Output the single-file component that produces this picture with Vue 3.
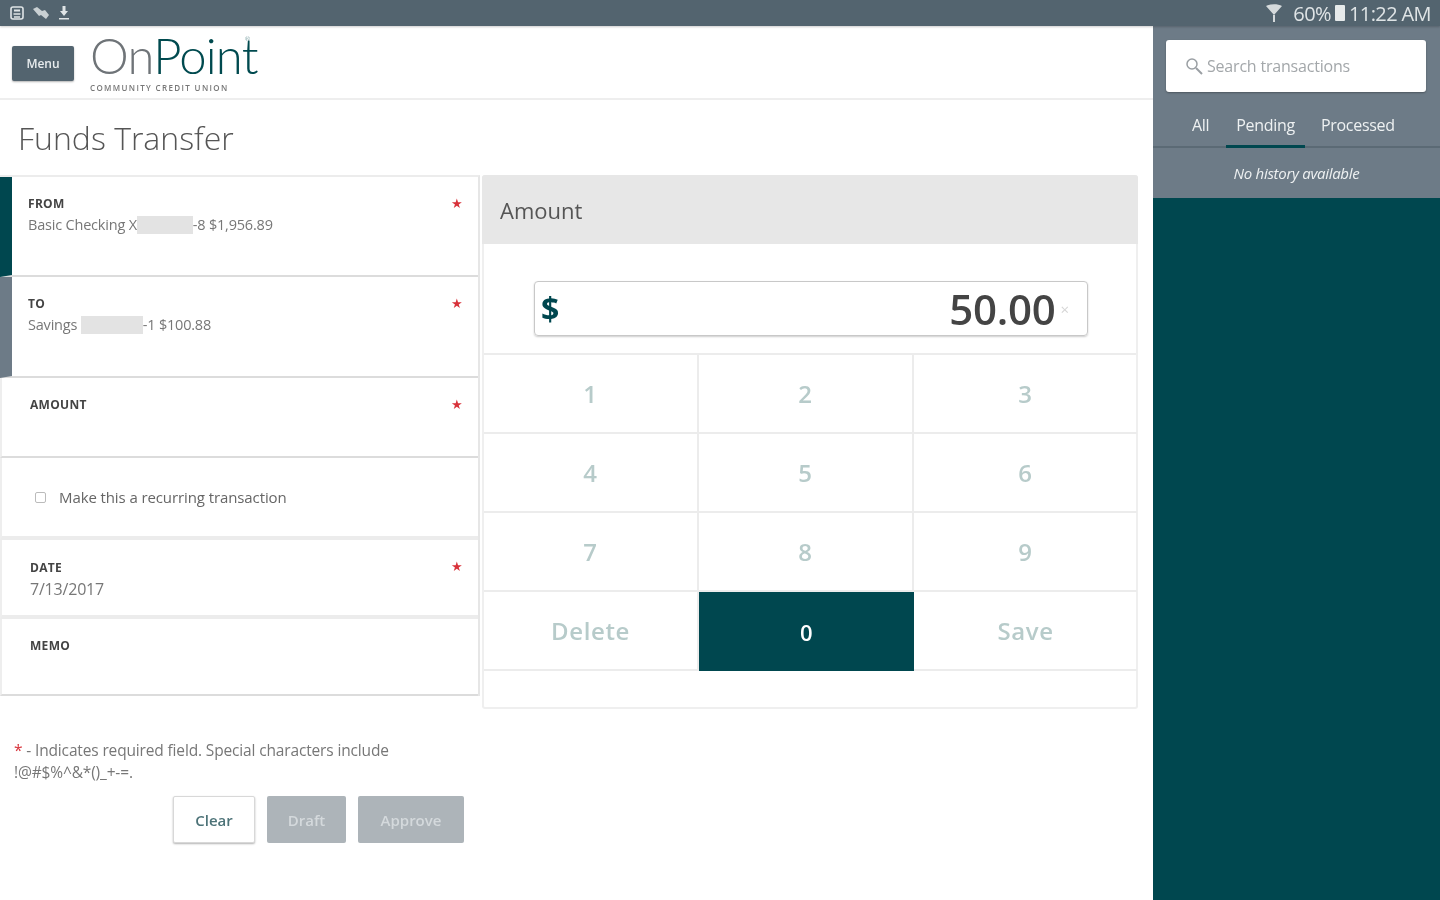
<template>
  <div class="page">
    <div class="status-bar">
      <div class="status-icons">
        <svg width="16" height="16" viewBox="0 0 16 16" fill="none" stroke="#dfe4e6" stroke-width="1.6">
          <rect x="2" y="2" width="12" height="12" rx="2" />
          <path d="M4.5 9h7M5 12h6" />
          <rect x="5" y="4.5" width="6" height="2" fill="#dfe4e6" stroke="none" />
        </svg>
        <svg width="18" height="16" viewBox="0 0 18 16" fill="#c9d0d3">
          <path d="M1 4l4-2 5 4 3-1 4 5-3 4-5-4-2 1z" />
        </svg>
        <svg width="14" height="16" viewBox="0 0 14 16" fill="#dfe4e6">
          <path d="M5.5 1h3v5H11l-4 5-4-5h2.500zM2 13h10v1.500H2z" />
        </svg>
      </div>
      <div class="status-right">
        <svg width="18" height="20" viewBox="0 0 18 20" fill="#d5dadc">
          <path d="M1 3c4-2.500 12-2.500 16 0l-8 9zM8 12h2v7H8z" />
        </svg>
        <span class="battery-text">60%</span>
        <span class="battery"></span>
        <span>11:22 AM</span>
      </div>
    </div>

    <div class="body">
      <main class="main">
        <header class="top">
          <button class="menu-btn">Menu</button>
          <div class="logo">
            <div class="logo-name"><span class="logo-on">On</span>Point<sup>®</sup></div>
            <div class="logo-sub">COMMUNITY CREDIT UNION</div>
          </div>
        </header>

        <h1 class="page-title">Funds Transfer</h1>

        <div class="content">
          <div class="left">
            <div class="fields">
              <div
                v-for="field in fields"
                :key="field.label"
                :class="['field', field.cls]"
              >
                <div class="field-label">{{ field.label }}</div>
                <div v-if="field.value" class="field-value">
                  {{ field.value }}<span v-if="field.hidden" class="hidden-num"></span>{{ field.rest }}
                </div>
                <span v-if="field.required" class="req">★</span>
              </div>
              <div class="field recurring">
                <span class="check"></span>
                <span>Make this a recurring transaction</span>
              </div>
              <div
                v-for="field in fieldsLower"
                :key="field.label"
                :class="['field', field.cls]"
              >
                <div class="field-label">{{ field.label }}</div>
                <div v-if="field.value" class="field-value">{{ field.value }}</div>
                <span v-if="field.required" class="req">★</span>
              </div>
            </div>

            <p class="note">
              <span class="note-star">*</span> - Indicates required field. Special characters include<br />!@#$%^&amp;*()_+-=.
            </p>
            <div class="actions">
              <button class="btn-clear">Clear</button>
              <button class="btn-off draft">Draft</button>
              <button class="btn-off approve">Approve</button>
            </div>
          </div>

          <section class="amount-panel">
            <div class="amount-head">Amount</div>
            <div class="amount-input-wrap">
              <div class="amount-input">
                <span class="dollar">$</span>
                <span class="amount-val">50.00</span>
                <span class="clear-x">×</span>
              </div>
            </div>
            <div class="keypad">
              <div
                v-for="key in keys"
                :key="key"
                :class="['key', { active: key === '0' }]"
              >
                {{ key }}
              </div>
            </div>
          </section>
        </div>
      </main>

      <aside class="side">
        <div class="side-top">
          <div class="search-wrap">
            <div class="search">
              <svg width="20" height="20" viewBox="0 0 20 20" fill="none" stroke="#9a9fa3" stroke-width="1.500">
                <circle cx="8" cy="8" r="5" />
                <path d="M12 12l6 6" stroke-width="2" />
              </svg>
              <span>Search transactions</span>
            </div>
          </div>
          <div class="tabs">
            <span class="tab tab-all">All</span>
            <span class="tab tab-pending">Pending</span>
            <span class="tab tab-processed">Processed</span>
          </div>
          <div class="no-history">No history available</div>
        </div>
      </aside>
    </div>
  </div>
</template>

<script setup>
const fields = [
  {
    label: "FROM",
    value: "Basic Checking X",
    hidden: true,
    rest: "-8 $1,956.89",
    required: true,
    cls: "from",
  },
  {
    label: "TO",
    value: "Savings ",
    hidden: true,
    rest: "-1 $100.88",
    required: true,
    cls: "to",
  },
  { label: "AMOUNT", required: true, cls: "amount" },
];

const fieldsLower = [
  { label: "DATE", value: "7/13/2017", required: true, cls: "date" },
  { label: "MEMO", cls: "memo" },
];

const keys = ["1", "2", "3", "4", "5", "6", "7", "8", "9", "Delete", "0", "Save"];
</script>

<style>
html,
body {
  margin: 0;
  background: #fff;
}
</style>

<style scoped>
.page {
  width: 1440px;
  height: 900px;
  overflow: hidden;
  display: flex;
  flex-direction: column;
  font-family: "Open Sans", "Liberation Sans", sans-serif;
  color: #555;
  filter: blur(0.45px);
}

.status-bar {
  height: 26px;
  flex: none;
  background: #53646f;
  display: flex;
  align-items: center;
  justify-content: space-between;
  padding: 0 9px;
  color: #dfe4e6;
  font-size: 20px;
  letter-spacing: -0.6px;
  box-shadow: 0 1px 2px rgba(0, 0, 0, 0.2);
  position: relative;
  z-index: 1;
}

.status-icons {
  display: flex;
  gap: 7px;
  align-items: center;
}

.status-right {
  display: flex;
  align-items: center;
  gap: 4px;
}

.battery-text {
  margin-left: 6px;
}

.battery {
  width: 10px;
  height: 16px;
  background: #e6eaeb;
  border-radius: 1px;
}

.body {
  flex: 1;
  display: flex;
  min-height: 0;
}

.main {
  width: 1153px;
  flex: none;
  display: flex;
  flex-direction: column;
}

.top {
  height: 74px;
  flex: none;
  border-bottom: 2px solid #eeeeee;
  box-sizing: border-box;
  display: flex;
  padding-left: 12px;
  gap: 16px;
}

.menu-btn {
  width: 62px;
  height: 35px;
  margin-top: 20px;
  border: none;
  border-radius: 2px;
  background: #53646f;
  color: #e8ecee;
  font-family: inherit;
  font-size: 12px;
  font-weight: 600;
  padding: 0;
  box-shadow: 0 1px 2px rgba(0, 0, 0, 0.3);
}

.logo {
  width: 160px;
  padding-top: 3px;
}

.logo-name {
  font-family: "Lato", sans-serif;
  font-weight: 300;
  font-size: 49px;
  line-height: 52px;
  letter-spacing: -0.8px;
  color: #004a4f;
  white-space: nowrap;
  position: relative;
}

.logo-on {
  color: #6f7478;
}

.logo-name sup {
  font-size: 6px;
  position: absolute;
  top: -16px;
  left: 155px;
}

.logo-sub {
  font-size: 8px;
  line-height: 10px;
  margin-top: 2px;
  letter-spacing: 1.35px;
  color: #777;
  font-weight: 600;
  white-space: nowrap;
}

.page-title {
  margin: 0;
  height: 75px;
  flex: none;
  box-sizing: border-box;
  padding: 15px 0 0 18px;
  font-size: 32px;
  line-height: 46px;
  font-weight: 300;
  color: #555;
}

.content {
  display: flex;
  gap: 2px;
  flex: 1;
  min-height: 0;
}

.left {
  width: 480px;
  flex: none;
}

.fields {
  border-right: 2px solid #e6e6e6;
  border-top: 2px solid #ececec;
}

.field {
  position: relative;
  box-sizing: border-box;
  border-bottom: 2px solid #dcdcdc;
  padding: 19px 28px 0;
  border-left: 2px solid #eee;
}

.field.from {
  height: 100px;
  border-left: 12px solid #00474f;
  padding-left: 16px;
}

.field.to {
  height: 101px;
  border-left: 12px solid #6d7b87;
  padding-left: 16px;
}

.field.amount {
  height: 80px;
}

.field.recurring {
  height: 82px;
  display: flex;
  align-items: center;
  gap: 13px;
  padding: 0 0 0 33px;
  font-size: 15px;
  letter-spacing: -0.1px;
  border-bottom: 4px solid #ececec;
  color: #666;
}

.field.date {
  height: 79px;
  border-bottom: 4px solid #ececec;
  padding-top: 20px;
}

.field.memo {
  height: 77px;
  padding-top: 19px;
}

.check {
  width: 9px;
  height: 9px;
  border: 1px solid #bbb;
  border-radius: 2px;
}

.field-label {
  font-size: 12px;
  line-height: 16px;
  font-weight: 700;
  color: #444;
  letter-spacing: 0.3px;
}

.field-value {
  font-size: 14.500px;
  line-height: 22px;
  margin-top: 2px;
  color: #777;
  letter-spacing: -0.2px;
  white-space: nowrap;
}

.hidden-num {
  display: inline-block;
  vertical-align: -4px;
  width: 56px;
  height: 18px;
  background: #e3e3e3;
}

.to .hidden-num {
  width: 62px;
}

.date .field-value {
  font-size: 16px;
}

.req {
  position: absolute;
  top: 17px;
  right: 15px;
  color: #d8323a;
  font-size: 13px;
  line-height: 18px;
}

.note {
  margin: 43px 0 0 14px;
  font-size: 15.500px;
  line-height: 22px;
  color: #777;
  letter-spacing: -0.15px;
  white-space: nowrap;
}

.note-star {
  color: #d8323a;
}

.actions {
  display: flex;
  gap: 12px;
  margin: 13px 0 0 173px;
}

.actions button {
  height: 47px;
  font-family: inherit;
  font-size: 15px;
  font-weight: 600;
  border-radius: 2px;
  padding: 0;
}

.btn-clear {
  width: 82px;
  background: #fff;
  color: #4d7378;
  border: 1px solid #d8d8d8;
  box-shadow: 0 1px 2px rgba(0, 0, 0, 0.3);
}

.btn-off {
  border: none;
  background: #adb4b9;
  color: #d4d9dc;
}

.draft {
  width: 79px;
}

.approve {
  width: 106px;
}

.amount-panel {
  width: 656px;
  height: 534px;
  box-sizing: border-box;
  border: 2px solid #efefef;
  border-top: none;
  border-radius: 3px;
  background: #fff;
}

.amount-head {
  height: 69px;
  margin: 0 -2px;
  background: #e7e7e7;
  border-radius: 3px 3px 0 0;
  display: flex;
  align-items: center;
  padding-left: 18px;
  font-size: 22px;
  font-weight: 400;
  color: #555;
}

.amount-input-wrap {
  height: 111px;
  box-sizing: border-box;
  padding: 37px 48px 0 50px;
  border-bottom: 2px solid #ececec;
}

.amount-input {
  height: 55px;
  box-sizing: border-box;
  border: 1px solid #c8c8c8;
  border-radius: 4px;
  box-shadow: 0 1px 2px rgba(0, 0, 0, 0.2);
  display: flex;
  align-items: center;
  padding: 0 18px 0 6px;
}

.dollar {
  font-size: 32px;
  font-weight: 700;
  color: #00474f;
}

.amount-val {
  margin-left: auto;
  font-size: 42px;
  font-weight: 600;
  color: #444;
  letter-spacing: -0.3px;
}

.clear-x {
  font-size: 15px;
  color: #d5d5d5;
  margin-left: 5px;
}

.keypad {
  display: grid;
  grid-template-columns: 215px 215px 1fr;
  grid-auto-rows: 79px;
  margin-right: -1px;
}

.key {
  display: flex;
  align-items: center;
  justify-content: center;
  font-size: 24px;
  font-weight: 600;
  color: #b7cbca;
  border-bottom: 2px solid #ececec;
  border-right: 2px solid #ececec;
  box-sizing: border-box;
  letter-spacing: 0.6px;
}

.key:nth-child(3n) {
  border-right: none;
}

.key.active {
  background: #00474f;
  color: #fff;
  font-size: 22px;
  border: none;
}

.side {
  flex: 1;
  background: #00474f;
}

.side-top {
  height: 172px;
  background: #6d7b87;
  color: #eef1f2;
}

.search-wrap {
  padding: 14px 14px 0 13px;
}

.search {
  height: 52px;
  background: #fff;
  border-radius: 3px;
  display: flex;
  align-items: center;
  gap: 3px;
  padding-left: 18px;
  color: #a3a7aa;
  font-size: 16px;
  letter-spacing: -0.2px;
  box-shadow: 0 1px 2px rgba(0, 0, 0, 0.3);
}

.tabs {
  height: 56px;
  box-sizing: border-box;
  margin-top: 0;
  border-bottom: 2px solid #5b6a75;
  position: relative;
  display: flex;
  align-items: flex-end;
  padding-left: 39px;
  font-size: 16px;
  letter-spacing: -0.3px;
}

.tab {
  height: 35px;
  box-sizing: border-box;
  line-height: 24px;
  margin-bottom: -2px;
}

.tab-pending {
  margin-left: 17px;
  padding: 0 10px;
  border-bottom: 3px solid #00474f;
}

.tab-processed {
  margin-left: 16px;
}

.no-history {
  text-align: center;
  font-style: italic;
  font-size: 15px;
  line-height: 50px;
  letter-spacing: -0.3px;
}
</style>
